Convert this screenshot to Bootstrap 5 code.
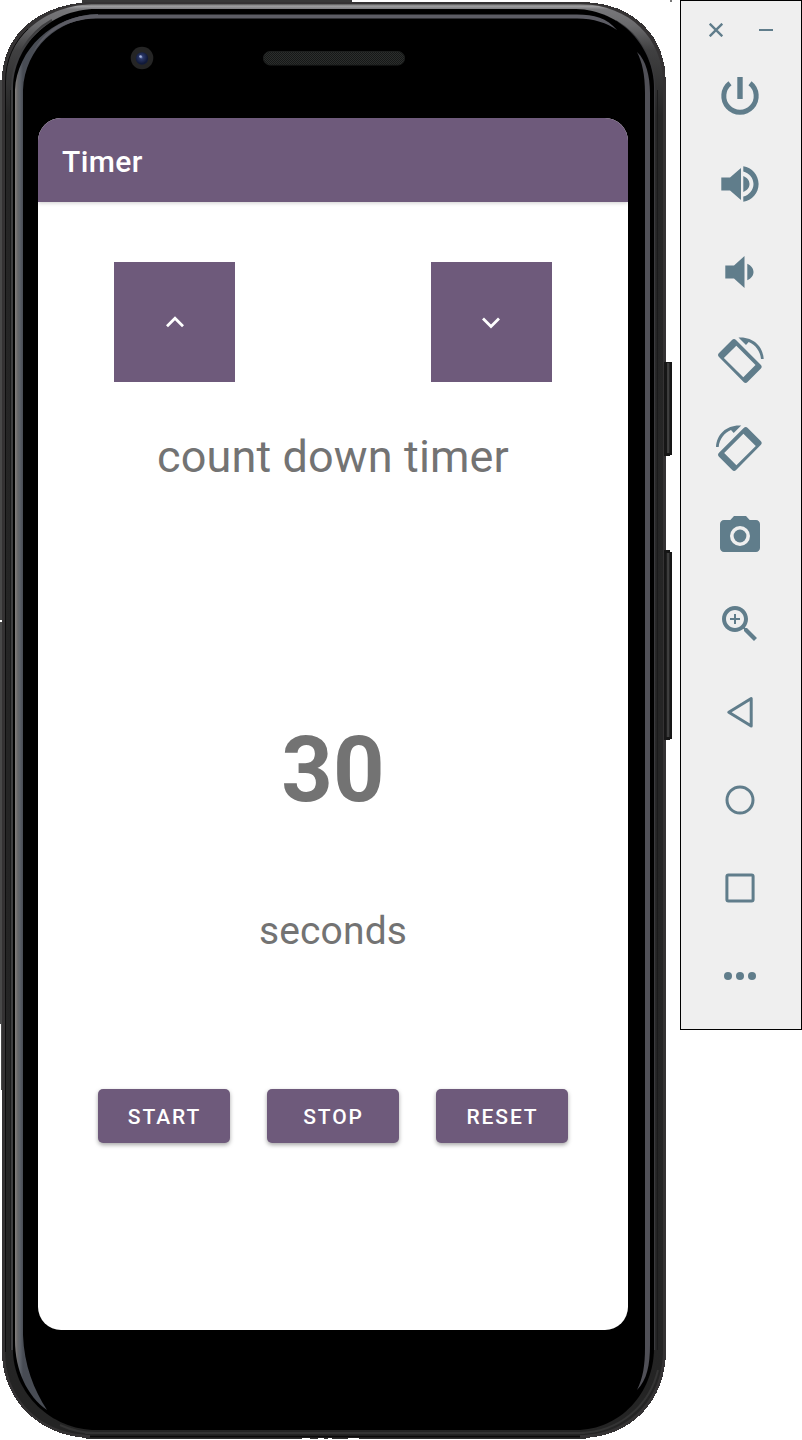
<!DOCTYPE html>
<html lang="en">
<head>
<meta charset="utf-8">
<meta name="viewport" content="width=device-width, initial-scale=1">
<title>Timer</title>
<link href="https://cdn.jsdelivr.net/npm/bootstrap@5.3.0/dist/css/bootstrap.min.css" rel="stylesheet">
<style>
body{font-family:Roboto,"Liberation Sans",sans-serif;background:#fff;color:#737373;overflow:hidden}
.device{width:672px;height:1440px;padding:118px 44px 110px 38px}
.device-frame{left:0;top:0}
.app-screen{border-radius:23px;background:#fff;z-index:1}
.app-bar{height:84px;padding-left:24px;padding-top:3px;background:#6e5a7b;color:#fff;font-size:30px;font-weight:500;letter-spacing:.4px;box-shadow:0 1px 4px rgba(0,0,0,.2)}
.arrow-row{padding:60px 76.4px 0}
.btn-arrow{width:120.5px;height:120px;background:#6e5a7b!important}
.tm-label{font-size:45px;line-height:60px;margin-top:45px;letter-spacing:.12px}
.tm-count{font-size:90px;line-height:106px;margin-top:231px}
.tm-unit{font-size:39px;line-height:52px;margin-top:81px;letter-spacing:.15px}
.action-row{gap:37px;margin-top:132px}
.btn-action{width:132px;height:54px;background:#6e5a7b!important;color:#fff!important;font-size:21px;font-weight:500;letter-spacing:1.9px;border-radius:5px;box-shadow:0 2px 4px rgba(0,0,0,.35)}
.btn-action.btn-action{padding:3px 0 0 1px!important}
.emu-bar{width:122px;height:1030px;margin-left:8px;background:#efefef;border:1px solid #000;color:#607d8b;padding-top:22px}
.emu-bar svg{display:block}
.win-row{gap:36px;padding-right:1px;margin-bottom:35px}
.tool-col{gap:40px;padding-right:2px}
</style>
</head>
<body>
<main class="d-flex align-items-start">
<section class="device position-relative flex-shrink-0 d-flex">
<svg class="device-frame position-absolute" width="672" height="1440" viewBox="0 0 672 1440" aria-hidden="true">
<defs>
<linearGradient id="rim" gradientUnits="userSpaceOnUse" x1="0" x2="0" y1="0" y2="1440"><stop offset=".0028" stop-color="#555"/><stop offset=".0042" stop-color="#a0a0a2"/><stop offset=".0065" stop-color="#77777a"/><stop offset=".018" stop-color="#6a6a6c"/><stop offset=".035" stop-color="#404041"/><stop offset=".08" stop-color="#262626"/><stop offset="1" stop-color="#242424"/></linearGradient>
<linearGradient id="shineL"><stop offset="0" stop-color="#85858a"/><stop offset=".25" stop-color="#5a5a5c"/><stop offset=".6" stop-color="#565b63"/><stop offset="1" stop-color="#3a3e45"/></linearGradient>
<linearGradient id="shineS" gradientUnits="userSpaceOnUse" x1="15" x2="23" y1="0" y2="0"><stop offset="0" stop-color="#85807f"/><stop offset=".35" stop-color="#666668"/><stop offset=".6" stop-color="#5d626a"/><stop offset="1" stop-color="#484c54"/></linearGradient>
<linearGradient id="key"><stop offset="0" stop-color="#111"/><stop offset=".4" stop-color="#4a4a4a"/><stop offset=".7" stop-color="#262626"/><stop offset="1" stop-color="#111"/></linearGradient>
<radialGradient id="lens" cx=".45" cy=".4"><stop offset="0" stop-color="#6577b0"/><stop offset=".3" stop-color="#2b3868"/><stop offset="1" stop-color="#111a3a"/></radialGradient>
<pattern id="mesh" width="2" height="2" patternUnits="userSpaceOnUse"><path fill="#2c2e2d" d="M0 0h2v2H0z"/><path fill="#161817" d="M0 0h1v1H0zM1 1h1v1H1z"/></pattern>
</defs>
<g shape-rendering="crispEdges">
<path fill="#484848" d="M0 80h4v1270H2V1090H0z"/>
<path fill="#fff" d="M0 620h2v2H0zM0 1024h1v66H0z"/>
<path fill="#383838" d="M82 0h270v4H82z"/>
<path fill="#303030" d="M86 1434h500v5H86z"/>
<path fill="#fff" d="M302 1438h8v2h-8zM318 1438h6v2h-6zM328 1438h4v2h-4zM348 1438h11v2h-11z"/>
<path fill="#777" d="M670 0h2v2h-2z"/>
<path fill="#343233" d="M96 2H586C632 4 666 34 666 82V1350C666 1402 630 1438 580 1438H92C40 1438 2 1400 2 1352V80C2 34 40 2 96 2z"/>
<path fill="#161616" d="M664 362h8v93h-2v1h-6zM664 550h6v2h2v187h-2v1h-6z"/>
<path fill="url(#key)" d="M667 363h4v90h-4zM666 553h5v184h-5z"/>
<path fill="#fff" d="M0 620h2v2H0z"/>
</g>
<path fill="url(#rim)" d="M96 4H580C630 5 663 38 663 84V1350C663 1400 628 1435 580 1435H92C42 1435 5 1400 5 1352V82C5 38 45 4 96 4z"/>
<path fill="none" stroke="#3e3e40" stroke-width="2" d="M12 1350V88C12 60 28 33 52 20"/>
<path fill="none" stroke="#0d0d0d" d="M5.500 1352V82C5.500 60 14 42 28 29"/>
<path fill="none" stroke="#3b3b3e" stroke-width="1.500" d="M654.500 1350V88C654 60 640 35 616 21"/>
<path d="M96 9H576C621 10 654 47 654 88V1348C654 1393 620 1430 576 1430H96C51 1430 13 1393 13 1350V88C13 47 49 9 96 9z"/>
<path fill="url(#shineS)" d="M15 90C17 50 52 15 98 14V18C58 18 25 48 23 90V1335C24 1365 34 1390 47 1410C27 1396 15 1370 15 1340z"/>
<path fill="#5c5c64" d="M96 14.500H577C594 14.500 607 18 617 30C607 23 594 18.500 577 18.500H96C67 19 45 33 33 53C43 31 66 15 96 14.500z"/>
<path fill="#505057" d="M637 52C646 60 650 76 650 93V1345C650 1365 647 1380 637 1390C643 1378 645 1365 645 1348V93C645 74 642 62 637 52z"/>
<path fill="none" stroke="#1b1b1c" d="M657.500 90V1350M10.500 90V1350"/>
<path fill="none" stroke="#343434" stroke-width="2" d="M85 1433H585M60 1425C75 1432 86 1433 96 1433M580 1433C620 1432 650 1405 658 1370"/>
<path fill="none" stroke="#0a0a0a" stroke-width="2" d="M90 1436.500H580"/>
<circle cx="142" cy="58" r="11.300" fill="#252525"/><circle cx="142" cy="58.500" r="6.200" fill="url(#lens)"/><circle cx="140.500" cy="56.500" r="1.300" fill="#a5b2d8"/>
<rect x="263.500" y="51.500" width="141" height="13.500" rx="6.500" fill="url(#mesh)" stroke="#1d1f1e"/>
</svg>
<div class="app-screen position-relative w-100 overflow-hidden d-flex flex-column">
<header class="app-bar d-flex align-items-center flex-shrink-0">Timer</header>
<div class="arrow-row d-flex justify-content-between">
<button class="btn btn-arrow rounded-0 border-0 p-0 d-flex align-items-center justify-content-center" aria-label="Up"><svg width="24" height="24" fill="none" stroke="#fff" stroke-width="2.800"><path d="M4 16.200 12 8.200 20 16.200"/></svg></button>
<button class="btn btn-arrow rounded-0 border-0 p-0 d-flex align-items-center justify-content-center" aria-label="Down"><svg width="24" height="24" fill="none" stroke="#fff" stroke-width="2.800"><path d="M4 8.500 12 16.500 20 8.500"/></svg></button>
</div>
<div class="tm-label text-center">count down timer</div>
<div class="tm-count text-center fw-bold">30</div>
<div class="tm-unit text-center">seconds</div>
<div class="action-row d-flex justify-content-center">
<button class="btn btn-action border-0">START</button>
<button class="btn btn-action border-0">STOP</button>
<button class="btn btn-action border-0">RESET</button>
</div>
</div>
</section>
<aside class="emu-bar flex-shrink-0">
<div class="win-row d-flex justify-content-center">
<svg width="14" height="14" fill="none" stroke="currentColor" stroke-width="2.400"><path d="M.7.7 13.300 13.300M13.300.7.7 13.300"/></svg>
<svg width="14" height="14" fill="currentColor"><path d="M0 6h14v2H0z"/></svg>
</div>
<div class="tool-col d-flex flex-column align-items-center">
<svg width="48" height="48"><path fill="none" stroke="currentColor" stroke-width="5" d="M14 11.300A16.200 16.200 0 1 0 34 11.300"/><path fill="currentColor" d="M21.300 5h5.400v22h-5.400z"/></svg>
<svg width="48" height="48" fill="currentColor"><path d="M5.300 17.500H14L25 8V40L14 30.500H5.300zM27.300 16c3.900 1.600 6.200 4.500 6.200 8s-2.300 6.400-6.200 8zM27.300 6.200C36 7.500 42.600 15 42.600 24S36 40.500 27.300 41.800V36.600C33 35.300 37.500 30 37.500 24S33 12.700 27.300 11.400z"/></svg>
<svg width="48" height="48" fill="currentColor"><path d="M9.300 17.500H18L28.500 8V40L18 30.500H9.300zM31.300 15.800c3.900 1.600 6.200 4.700 6.200 8.200s-2.300 6.600-6.200 8.200z"/></svg>
<svg width="48" height="48" fill="currentColor"><g id="turn"><path fill-rule="evenodd" d="M16 4Q18 2 20 4L44.700 28.700Q46.700 30.700 44.700 32.700L31.500 46Q29.600 48 27.600 46L3 21Q1 19 3 17zM20.300 9.700 7.900 22 27.300 41.200 39.500 29z"/><path d="M22.500 1.600C36 .5 47 9.500 47.700 23H45C44.300 15 39.500 9 32.700 6L30 9z"/></g></svg>
<svg width="48" height="48" fill="currentColor"><use href="#turn" transform="translate(47.700 0) scale(-1 1)"/></svg>
<svg width="48" height="48" viewBox="0 0 24 24" fill="currentColor"><path fill-rule="evenodd" d="M9 2 7.170 4H4c-1.100 0-2 .9-2 2v12c0 1.100.9 2 2 2h16c1.100 0 2-.9 2-2V6c0-1.100-.9-2-2-2h-3.170L15 2zM12 7a5 5 0 1 1 0 10 5 5 0 0 1 0-10z"/><circle cx="12" cy="12" r="3.200"/></svg>
<svg width="48" height="48" viewBox="0 0 24 24" fill="currentColor"><path d="M15.500 14h-.79l-.28-.27C15.410 12.590 16 11.110 16 9.500 16 5.910 13.090 3 9.500 3S3 5.910 3 9.500 5.910 16 9.500 16c1.610 0 3.090-.59 4.230-1.570l.27.28v.79l5 4.990L20.490 19l-4.990-5zm-6 0C7.010 14 5 11.990 5 9.500S7.010 5 9.500 5 14 7.010 14 9.500 11.990 14 9.500 14zM12 10h-2v2H9v-2H7V9h2V7h1v2h2z"/></svg>
<svg width="48" height="48" fill="none" stroke="currentColor" stroke-width="3" stroke-linejoin="round"><path d="M12.800 24.200 35.200 10.500V38z"/></svg>
<svg width="48" height="48" fill="none" stroke="currentColor" stroke-width="3"><circle cx="24" cy="24" r="13"/></svg>
<svg width="48" height="48" fill="none" stroke="currentColor" stroke-width="3"><rect x="10.900" y="10.900" width="26.200" height="26.200" rx="1.500"/></svg>
<svg width="48" height="48" fill="currentColor"><circle cx="12" cy="24" r="4"/><circle cx="24" cy="24" r="4"/><circle cx="36" cy="24" r="4"/></svg>
</div>
</aside>
</main>
<script src="https://cdn.jsdelivr.net/npm/bootstrap@5.3.0/dist/js/bootstrap.bundle.min.js"></script>
</body>
</html>
